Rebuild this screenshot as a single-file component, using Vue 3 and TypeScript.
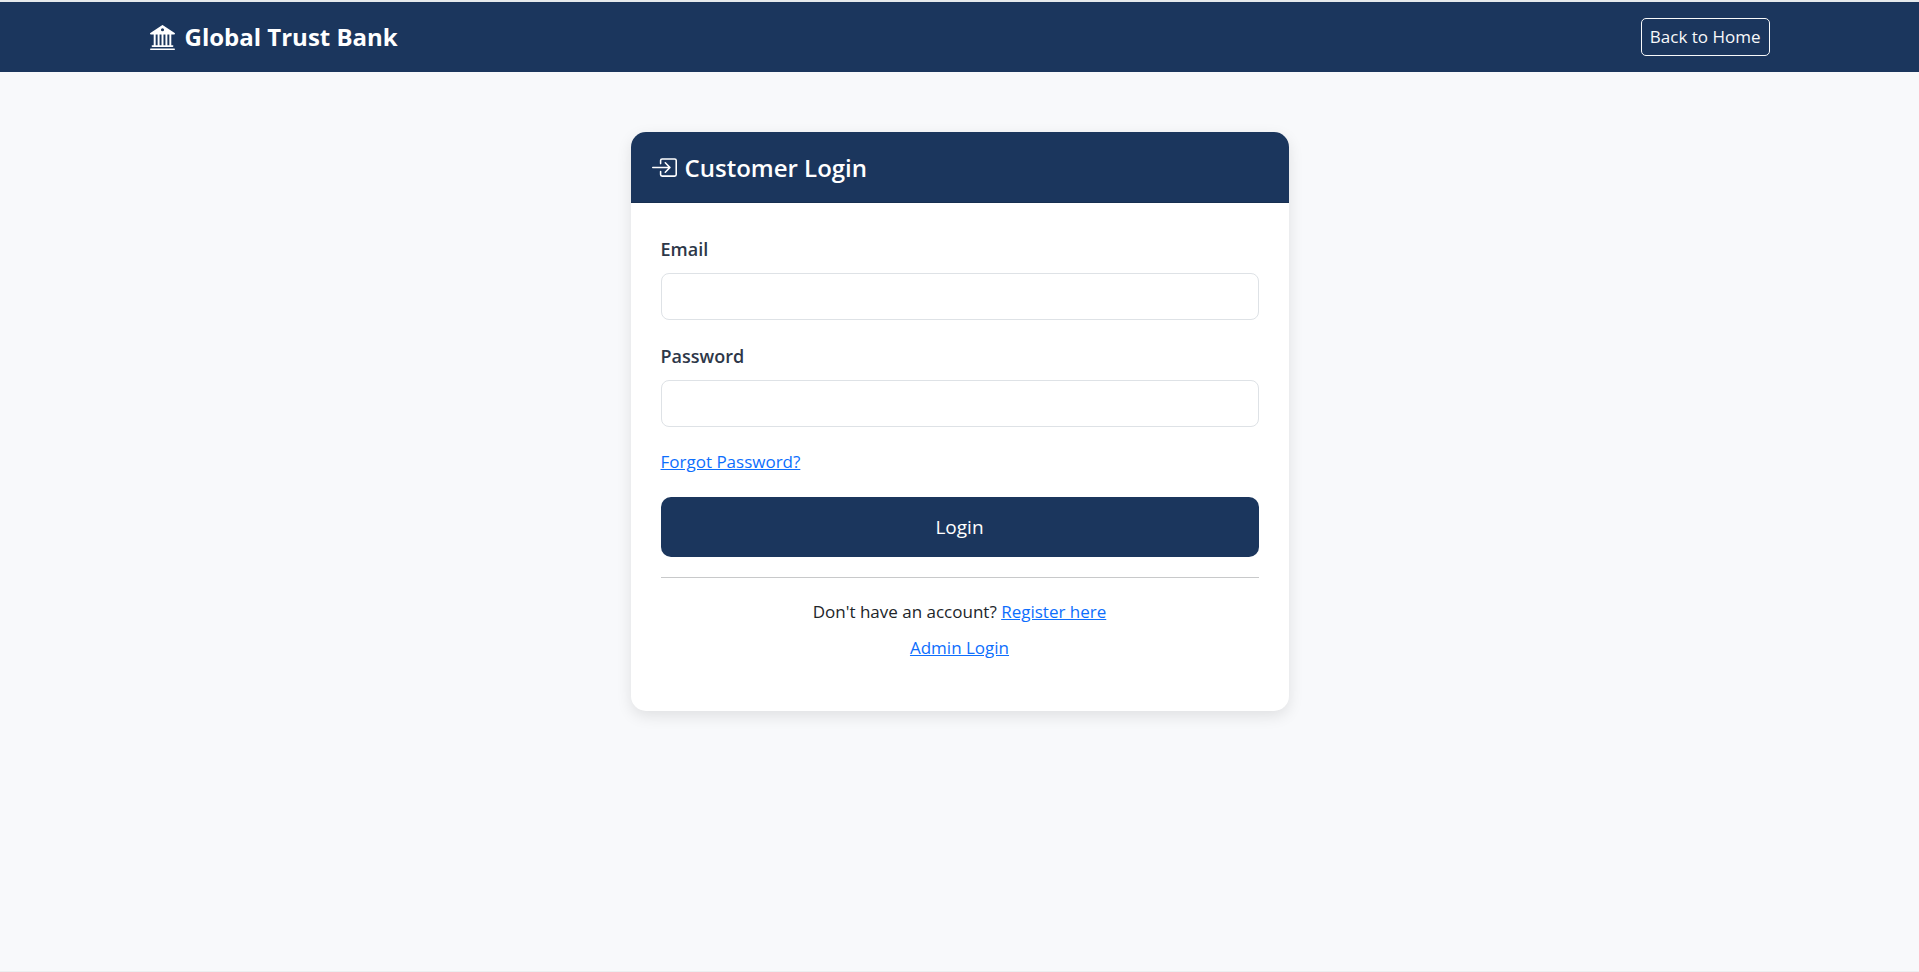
<script setup lang="ts">
import { ref } from 'vue'

const email = ref('')
const password = ref('')
</script>

<template>
  <div class="page">
    <header class="navbar">
      <div class="container">
        <a class="brand" href="#">
          <svg class="icon" viewBox="0 0 16 16" aria-hidden="true">
            <path d="M8.277.084a.5.5 0 0 0-.554 0l-7.5 5A.5.5 0 0 0 .5 6h1.875v7H1.5a.5.5 0 0 0 0 1h13a.5.5 0 1 0 0-1h-.875V6H15.5a.5.5 0 0 0 .277-.916l-7.5-5zM12.375 6v7h-1.25V6h1.25zm-2.5 0v7h-1.25V6h1.25zm-2.5 0v7h-1.25V6h1.25zm-2.5 0v7h-1.25V6h1.25zM8 4a1 1 0 1 1 0-2 1 1 0 0 1 0 2zM.5 15a.5.5 0 0 0 0 1h15a.5.5 0 1 0 0-1H.5z" />
          </svg>
          <span>Global Trust Bank</span>
        </a>
        <a class="home" href="#">Back to Home</a>
      </div>
    </header>

    <main class="card">
      <div class="card-header">
        <svg class="icon" viewBox="0 0 16 16" aria-hidden="true">
          <path d="M6 3.5a.5.5 0 0 1 .5-.5h8a.5.5 0 0 1 .5.5v9a.5.5 0 0 1-.5.5h-8a.5.5 0 0 1-.5-.5v-2a.5.5 0 0 0-1 0v2A1.5 1.5 0 0 0 6.5 14h8a1.5 1.5 0 0 0 1.5-1.5v-9A1.5 1.5 0 0 0 14.5 2h-8A1.5 1.5 0 0 0 5 3.5v2a.5.5 0 0 0 1 0v-2z" />
          <path d="M11.854 8.354a.5.5 0 0 0 0-.708l-3-3a.5.5 0 1 0-.708.708L10.293 7.5H.5a.5.5 0 0 0 0 1h9.793l-2.147 2.146a.5.5 0 0 0 .708.708l3-3z" />
        </svg>
        <h1>Customer Login</h1>
      </div>
      <form class="card-body" @submit.prevent>
        <div class="field">
          <label for="email">Email</label>
          <input id="email" v-model="email" type="email" />
        </div>
        <div class="field">
          <label for="password">Password</label>
          <input id="password" v-model="password" type="password" />
        </div>
        <p class="forgot"><a href="#">Forgot Password?</a></p>
        <button class="submit" type="submit">Login</button>
        <hr />
        <div class="links">
          <p>Don't have an account? <a href="#">Register here</a></p>
          <p><a href="#">Admin Login</a></p>
        </div>
      </form>
    </main>
  </div>
</template>

<style>
body {
  margin: 0;
  background: #f8f9fb;
}
</style>

<style scoped>
.page {
  box-sizing: border-box;
  min-height: 100vh;
  border-top: 2px solid #e6eaec;
  border-bottom: 1px solid #eceff1;
  background: #f8f9fb;
  color: #212529;
  font-family: "Open Sans", "Noto Sans", sans-serif;
  font-size: 17px;
  line-height: 28px;
}

.navbar {
  background: #1b365d;
  color: #fff;
}

.container {
  display: flex;
  align-items: center;
  justify-content: space-between;
  box-sizing: border-box;
  max-width: 1650px;
  min-height: 70px;
  margin: 0 auto;
  padding: 0 15px;
}

.icon {
  flex: none;
  width: 25px;
  height: 25px;
  fill: currentColor;
}

.brand {
  display: flex;
  align-items: center;
  gap: 10px;
  color: #fff;
  font-size: 24px;
  font-weight: 700;
  line-height: 36px;
  text-decoration: none;
}

.home {
  padding: 4px 8px;
  border: 1px solid #f8f9fa;
  border-radius: 5px;
  color: #f8f9fa;
  text-decoration: none;
}

.card {
  width: 658px;
  max-width: 100%;
  margin: 60px auto 0;
  border-radius: 15px;
  background: #fff;
  box-shadow: 0 5px 15px rgba(0, 0, 0, 0.1);
}

.card-header {
  display: flex;
  align-items: center;
  gap: 8px;
  padding: 19px 21px 18px;
  border-bottom: 1px solid #172f50;
  border-radius: 15px 15px 0 0;
  background: #1b365d;
  color: #fff;
}

.card-header h1 {
  margin: 0;
  font-size: 24px;
  font-weight: 600;
  line-height: 33px;
}

.card-body {
  padding: 30px;
}

.field {
  margin-bottom: 20px;
}

label {
  display: block;
  margin-bottom: 8px;
  color: #2d3748;
  font-size: 18px;
  font-weight: 600;
  line-height: 32px;
}

input {
  display: block;
  box-sizing: border-box;
  width: 100%;
  height: 47px;
  padding: 8px 15px;
  border: 1px solid #dee2e6;
  border-radius: 8px;
  background: #fff;
  color: inherit;
  font: inherit;
}

a {
  color: #0d6efd;
}

p {
  margin: 0;
}

.forgot {
  margin-bottom: 20px;
  line-height: 30px;
}

.submit {
  display: block;
  width: 100%;
  height: 60px;
  border: 0;
  border-radius: 10px;
  background: #1b365d;
  color: #fff;
  font: inherit;
  font-size: 19px;
}

hr {
  margin: 20px 0;
  border: 0;
  border-top: 1px solid #c8c9ca;
}

.links {
  display: grid;
  gap: 8px;
  padding-bottom: 19px;
  text-align: center;
}
</style>
